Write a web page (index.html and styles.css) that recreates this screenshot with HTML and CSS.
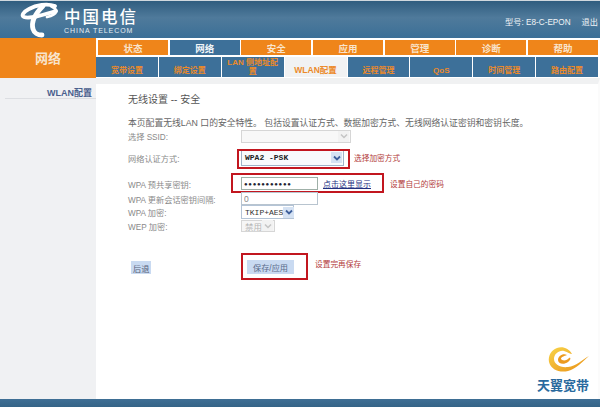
FILE: index.html
```html
<!DOCTYPE html>
<html lang="zh">
<head>
<meta charset="utf-8">
<title>无线设置 -- 安全</title>
<link rel="stylesheet" href="styles.css">
</head>
<body>
<div class="page">
  <header class="header">
    <div class="brand">
      <svg class="brand-mark" viewBox="0 0 40 36" width="40" height="36" aria-hidden="true">
        <path d="M35 4 C27 1 16 3 9 7 C3 10 1 14 4 15 C9 17 20 14 36 9" fill="none" stroke="#fff" stroke-width="3.800" stroke-linecap="round"/>
        <path d="M23 4 C15 12 11 20 13 27 C14 31 18 33 22 33" fill="none" stroke="#fff" stroke-width="4.800" stroke-linecap="round"/>
        <path d="M31 4 C34 6 37 7 36 10 C35 13 31 14 27 15" fill="none" stroke="#fff" stroke-width="2.800" stroke-linecap="round"/>
      </svg>
      <div class="brand-text">
        <div class="brand-cn">中国电信</div>
        <div class="brand-en">CHINA TELECOM</div>
      </div>
    </div>
    <div class="meta"><span>型号: E8-C-EPON</span><span>退出</span></div>
  </header>

  <nav class="nav">
    <div class="section">网络</div>
    <div class="tabs">
      <div class="tabs-main">
        <a class="tab">状态</a><a class="tab tab-on">网络</a><a class="tab">安全</a><a class="tab">应用</a><a class="tab">管理</a><a class="tab">诊断</a><a class="tab">帮助</a>
      </div>
      <div class="tabs-sub">
        <a class="sub">宽带设置</a><a class="sub">绑定设置</a><a class="sub sub-two"><span>LAN 侧地址配<br>置</span></a><a class="sub sub-on">WLAN配置</a><a class="sub">远程管理</a><a class="sub">QoS</a><a class="sub">时间管理</a><a class="sub">路由配置</a>
      </div>
    </div>
  </nav>

  <div class="body">
    <aside class="side"><div class="side-item">WLAN配置</div></aside>
    <main class="main">
      <h1 class="title">无线设置 -- 安全</h1>
      <p class="desc">本页配置无线LAN 口的安全特性。 包括设置认证方式、数据加密方式、无线网络认证密钥和密钥长度。</p>

      <form class="form">
        <div class="row row-ssid">
          <label>选择 SSID:</label>
          <div class="sel sel-ssid"><span class="arrow arrow-off"><svg viewBox="0 0 8 6" width="8" height="6"><path d="M1 1.500L4 4.500L7 1.500" fill="none" stroke="#c4c4c4" stroke-width="1.500"/></svg></span></div>
        </div>
        <div class="row row-auth">
          <label>网络认证方式:</label>
          <div class="sel sel-auth"><span class="mono">WPA2 -PSK</span><span class="arrow"><svg viewBox="0 0 8 6" width="8" height="6"><path d="M1 1.500L4 4.500L7 1.500" fill="none" stroke="#3d5f9c" stroke-width="1.800"/></svg></span></div>
          <span class="note">选择加密方式</span>
          <i class="mark mark-auth"></i>
        </div>
        <div class="row row-psk">
          <label>WPA 预共享密钥:</label>
          <input class="field" type="text" value="●●●●●●●●●●●" readonly>
          <a class="reveal">点击这里显示</a>
          <span class="note note-psk">设置自己的密码</span>
          <i class="mark mark-psk"></i>
        </div>
        <div class="row row-int">
          <label>WPA 更新会话密钥间隔:</label>
          <input class="field field-int" type="text" value="0" readonly>
        </div>
        <div class="row row-enc">
          <label>WPA 加密:</label>
          <div class="sel sel-enc"><span class="mono mono-reg">TKIP+AES</span><span class="arrow"><svg viewBox="0 0 8 6" width="8" height="6"><path d="M1 1.500L4 4.500L7 1.500" fill="none" stroke="#3d5f9c" stroke-width="1.800"/></svg></span></div>
        </div>
        <div class="row row-wep">
          <label>WEP 加密:</label>
          <div class="sel sel-wep"><span class="dim">禁用</span><span class="arrow arrow-off"><svg viewBox="0 0 8 6" width="8" height="6"><path d="M1 1.500L4 4.500L7 1.500" fill="none" stroke="#c4c4c4" stroke-width="1.500"/></svg></span></div>
        </div>
        <div class="row row-btn">
          <div class="back-cell"><button class="btn" type="button">后退</button></div>
          <button class="btn btn-save" type="button">保存/应用</button>
          <span class="note note-save">设置完再保存</span>
          <i class="mark mark-save"></i>
        </div>
      </form>

      <div class="promo">
        <svg viewBox="0 0 42 28" width="42" height="28" aria-hidden="true">
          <defs>
            <linearGradient id="sw" x1="0" y1="0" x2="1" y2="1"><stop offset="0" stop-color="#f8d448"/><stop offset="1" stop-color="#e98f16"/></linearGradient>
          </defs>
          <path d="M24 8 C21 2 14 0 9 2 C3 4 0 10 1 16 C3 24 12 27 20 25 C28 23 35 15 41 10 C34 14 28 20 20 21 C12 22 6 18 6 13 C6 8 11 4 16 5 C20 6 22 8 24 8Z" fill="url(#sw)"/>
          <path d="M19 9 C15 7 10 10 10 14 C10 18 16 19 20 16 C23 14 23 11 21 12 C19 15 14 15 13 13 C13 11 16 10 19 9Z" fill="#ec9a1d"/>
        </svg>
        <div class="promo-text">天翼宽带</div>
      </div>
    </main>
  </div>
  <footer class="footer"></footer>
</div>
</body>
</html>
```
FILE: styles.css
```css
* { box-sizing: border-box; }
html, body { margin: 0; padding: 0; background: #fff; }
body { font-family: "Liberation Sans", "Noto Sans CJK SC", sans-serif; font-size: 9px; color: #777; }
.page { width: 600px; height: 407px; display: flex; flex-direction: column; overflow: hidden; background: #fff; }

.header { height: 38px; flex: none; display: flex; justify-content: space-between; align-items: center; padding: 1px 2px 0 20px; background: linear-gradient(#2f5d7f 0, #4f7a9b 45%, #3b6f97 100%); border-top: 1px solid #cfd8de; }
.brand { display: flex; align-items: center; gap: 4px; }
.brand-mark { display: block; }
.brand-cn { font-family: "Noto Sans CJK SC", sans-serif; font-weight: 500; font-size: 16.500px; line-height: 20px; letter-spacing: 2px; color: #fff; white-space: nowrap; }
.brand-en { font-size: 7px; line-height: 8px; letter-spacing: .95px; color: #e6edf2; white-space: nowrap; margin-top: 1px; }
.meta { display: flex; gap: 11px; color: #f0f4f7; font-size: 8.200px; padding-top: 2px; }

.nav { height: 40px; flex: none; display: flex; background: #fff; }
.section { width: 96px; flex: none; display: flex; align-items: center; justify-content: center; background: #ef851a; color: #f8e4cc; font-weight: 700; font-size: 13px; padding-bottom: 2px; }
.tabs { flex: 1; display: flex; flex-direction: column; padding-right: 2px; }
.tabs-main { height: 15px; margin-top: 2px; padding: 0 0 0 2px; display: flex; gap: 1.500px; }
.tab { flex: 1; display: flex; align-items: center; justify-content: center; background: #ef851a; color: #f9e4cc; font-size: 9.500px; font-weight: 700; }
.tab-on { background: #3d7099; color: #f1f5f8; }
.tabs-sub { height: 20px; margin-top: 2px; display: flex; gap: 1px; }
.sub { flex: 1 1 0; min-width: 0; display: flex; align-items: flex-end; justify-content: center; padding-bottom: 2px; background: #3d7099; color: #ec8a2a; font-size: 8px; font-weight: 700; line-height: 9px; text-align: center; white-space: nowrap; }
.sub-two { padding-bottom: 1px; }
.sub-on { background: #f1f2f3; font-size: 8.500px; }

.body { flex: 1; min-height: 0; display: flex; }
.side { width: 96px; flex: none; background: #f0f1f3; padding: 8px 0 0 5px; }
.side-item { height: 13px; text-align: right; padding-right: 4px; color: #4a5f8e; font-weight: 700; font-size: 9px; border-bottom: 1px solid #dcdee2; }
.main { flex: 1; position: relative; padding: 0 0 0 32px; border-top: 6px solid #f0f1f2; border-right: 2px solid #fbfbfb; }

.title { margin: 10px 0 0; font-size: 10px; line-height: 12px; font-weight: 400; color: #555; }
.desc { margin: 11px 0 0; font-size: 8.800px; line-height: 12px; color: #666; white-space: nowrap; }

.row { position: relative; display: flex; align-items: center; }
.row label { width: 113px; flex: none; color: #8a8a8a; font-size: 8.200px; white-space: nowrap; }
.row-ssid { height: 14px; }
.row-auth { height: 17px; margin-top: 6px; }
.row-psk { height: 13px; margin-top: 11px; }
.row-int { height: 13px; margin-top: 2px; }
.row-enc { height: 14px; }
.row-wep { height: 13px; }
.row-btn { height: 14px; margin-top: 28px; align-items: flex-start; }

.sel { position: relative; height: 100%; display: flex; align-items: center; justify-content: space-between; padding: 0 1px 0 3px; background: #fff; border: 1px solid #b4c4d6; }
.sel-ssid { width: 110px; height: 13px; border-color: #d6d6d6; background: #f8f8f8; }
.sel-auth { width: 103px; background: #f8fafc; border-color: #9fb2c8; }
.sel-enc { width: 53px; }
.sel-wep { width: 34px; height: 12px; border-color: #d6d6d6; background: #f6f6f6; }
.arrow { width: 11px; height: 11px; flex: none; display: flex; align-items: center; justify-content: center; background: #d5e2f3; }
.arrow-off { background: #f2f2f2; margin-left: auto; }
.mono { font-family: "Liberation Mono", monospace; font-size: 8px; font-weight: 700; color: #222; white-space: nowrap; }
.mono-reg { font-weight: 400; color: #333; font-size: 8px; }
.dim { color: #b5b5b5; font-size: 8.500px; }

.field { width: 77px; height: 13px; padding: 0 2px; border: 1px solid #9fb0a8; background: #fff; color: #223; font: 6px "Liberation Sans", sans-serif; letter-spacing: .7px; outline: none; }
.field-int { font-size: 8.500px; letter-spacing: 0; color: #888; border-color: #b8c4cf; }
.reveal { margin-left: 5px; color: #24307f; text-decoration: underline; font-size: 8px; white-space: nowrap; }
.note { margin-left: 10px; color: #b23a3a; font-size: 7.700px; white-space: nowrap; }
.note-psk { margin-left: 19px; }
.note-save { margin-left: 21px; line-height: 10px; }

.back-cell { width: 113px; flex: none; padding: 1px 0 0 3px; }
.btn { height: 13px; padding: 0 2px; border: 0; background: #c9daf1; color: #555e78; font: 8.200px "Liberation Sans", "Noto Sans CJK SC", sans-serif; display: block; }
.btn-save { width: 47px; margin-left: 6px; height: 14px; color: #5a6a8a; }

.mark { position: absolute; border: 2px solid #c2161f; pointer-events: none; }
.mark-auth { left: 109px; top: 0; width: 113px; height: 20px; }
.mark-psk { left: 103px; top: -4px; width: 153px; height: 20px; }
.mark-save { left: 113px; top: -7px; width: 67px; height: 27px; }

.promo { position: absolute; right: 8px; bottom: 7px; width: 54px; display: flex; flex-direction: column; align-items: center; }
.promo svg { margin: 0 0 4px 12px; display: block; }
.promo-text { font-family: "Noto Sans CJK SC", sans-serif; font-weight: 700; font-size: 13px; line-height: 14px; color: #2a6a9e; white-space: nowrap; }

.footer { height: 8px; flex: none; background: linear-gradient(#3f6f95, #356487); }
```
